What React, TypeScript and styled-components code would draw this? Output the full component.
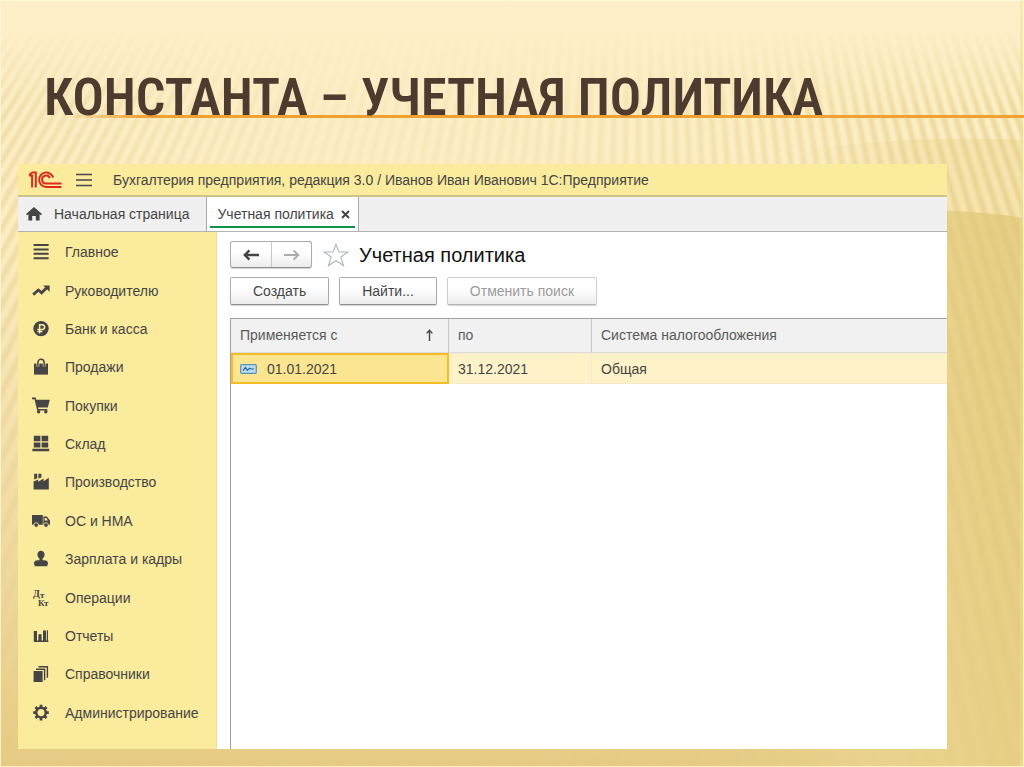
import React from 'react';
import styled, { createGlobalStyle } from 'styled-components';

const ink = '#454545';
const sun = '#faeb9d';

const GlobalStyle = createGlobalStyle`
  *, *::before, *::after { box-sizing: border-box; }
  body {
    margin: 0;
    color: ${ink};
    font: 14px/20px "Liberation Sans", Arial, sans-serif;
  }
  button { font: inherit; color: inherit; cursor: pointer; }
  svg { display: block; flex: none; }
`;

const Slide = styled.div`
  position: relative;
  isolation: isolate;
  display: flex;
  flex-direction: column;
  min-height: 100vh;
  padding: 74px 0 18px;
  overflow: hidden;
`;

const BackdropSvg = styled.svg`
  position: absolute;
  inset: 0;
  z-index: -1;
  width: 100%;
  height: 100%;
`;

const SlideTitle = styled.h1`
  margin: 0 0 42px;
  padding-left: 44px;
  background: linear-gradient(90deg, rgba(240, 161, 50, 0) 6%, #f0a132 14%) 0 41px / 100% 3px no-repeat;
  color: #4e3b30;
  font: 600 52px/48px "Roboto Condensed", "Liberation Sans", sans-serif;
  text-transform: uppercase;
`;

const AppWindow = styled.main`
  flex: 1;
  display: flex;
  flex-direction: column;
  margin: 0 77px 0 18px;
  background: #fff;
`;

const TopBar = styled.header`
  display: flex;
  align-items: center;
  height: 33px;
  padding: 0 11px;
  border-bottom: 2px solid #cdc48a;
  background: ${sun};
`;

const MenuButton = styled.button`
  margin: 0 21px 0 14px;
  padding: 0;
  border: 0;
  background: none;
`;

const TabStrip = styled.nav`
  display: flex;
  height: 35px;
  border-bottom: 1px solid #b4b4b4;
  background: #f0f0f0;
`;

const HomeTab = styled.button`
  display: flex;
  align-items: center;
  gap: 12px;
  padding: 0 17px 0 8px;
  border: 0;
  border-right: 1px solid #a9a9a9;
  background: none;
`;

const ActiveTab = styled.div`
  display: flex;
  align-items: center;
  gap: 7px;
  padding: 0 8px 0 7px;
  border-right: 1px solid #a9a9a9;
  background: linear-gradient(#0e9448, #0e9448) 3px 29px / calc(100% - 6px) 2px no-repeat #fff;
`;

const TabLabel = styled.button`
  padding: 0 0 0 3px;
  border: 0;
  background: none;
`;

const CloseButton = styled.button`
  padding: 0;
  border: 0;
  background: none;
`;

const Body = styled.div`
  flex: 1;
  display: flex;
`;

const SideNav = styled.nav`
  flex: none;
  display: grid;
  grid-auto-rows: 1fr;
  width: 199px;
  padding: 1px 0 17px;
  border-right: 1px solid #e6dcae;
  background: ${sun};
`;

const SideLink = styled.a`
  display: flex;
  align-items: center;
  gap: 15px;
  padding-left: 14px;
  color: ${ink};
  text-decoration: none;
  white-space: nowrap;
`;

const Content = styled.section`
  flex: 1;
  min-width: 0;
  display: flex;
  flex-direction: column;
  padding: 9px 0 0 13px;
`;

const HeadingRow = styled.div`
  display: flex;
  align-items: center;
  margin-bottom: 9px;
`;

const HistoryGroup = styled.div`
  display: flex;
  height: 27px;
  border: 1px solid #acacac;
  border-bottom-color: #8f8f8f;
  border-radius: 3px;
  background: linear-gradient(#fff 40%, #ececec);
  box-shadow: 0 1px 1px #d4d4d4;
`;

const HistoryButton = styled.button`
  display: flex;
  align-items: center;
  justify-content: center;
  width: 40px;
  padding: 0;
  border: 0;
  background: none;
  & + & { border-left: 1px solid #c8c8c8; }
`;

const StarButton = styled.button`
  margin: 0 10px 0 11px;
  padding: 0;
  border: 0;
  background: none;
`;

const PageTitle = styled.h2`
  margin: 0;
  color: #111;
  font-size: 20px;
  line-height: 24px;
  font-weight: 400;
`;

const CommandBar = styled.div`
  display: flex;
  gap: 10px;
  margin-bottom: 13px;
`;

const CommandButton = styled.button`
  height: 28px;
  padding: 0 22px;
  border: 1px solid #acacac;
  border-bottom-color: #8f8f8f;
  border-radius: 2px;
  background: linear-gradient(#fff 40%, #ececec);
  box-shadow: 0 1px 1px #d4d4d4;
  &:disabled {
    border-color: #cfcfcf;
    border-bottom-color: #b5b5b5;
    color: #9b9b9b;
  }
`;

const GridFrame = styled.div`
  flex: 1;
  border: solid #9f9f9f;
  border-width: 1px 0 0 1px;
`;

const Grid = styled.table`
  width: 100%;
  table-layout: fixed;
  border-collapse: separate;
  border-spacing: 0;
`;

const HeadCell = styled.th<{ $width?: number }>`
  width: ${p => (p.$width ? `${p.$width}px` : 'auto')};
  height: 34px;
  padding: 0 9px 2px;
  border-right: 1px solid #c6c6c6;
  border-bottom: 1px solid #dcdcdc;
  background: #f1f1f1;
  color: #5a5a5a;
  font-weight: 400;
  text-align: left;
  &:last-child { border-right: 0; }
`;

const SortHead = styled.span`
  display: flex;
  align-items: center;
  justify-content: space-between;
  padding-right: 5px;
`;

const Cell = styled.td<{ $selected?: boolean }>`
  height: 31px;
  padding: 0 9px;
  border: solid #f4ead0;
  border-width: 1px 1px 1px 0;
  background: #fdf2c8;
  &:last-child { border-right: 0; }
  ${p => p.$selected && `
    padding-left: 7px;
    border: 2px solid #f4bd28;
    background: #fce590;
  `}
`;

const DateMark = styled.span`
  display: flex;
  align-items: center;
  gap: 10px;
`;

/* Ray fan: every ray starts at one vanishing point above the slide. */
const VANISH = { x: 646, y: -910 };
const FLOOR = 780;
const rays = Array.from({ length: 150 }, (_, i) => {
  const at = (x: number) => VANISH.x + ((x - VANISH.x) * (FLOOR - VANISH.y)) / (100 - VANISH.y);
  const x = -420 + i * 12;
  return `M${VANISH.x} ${VANISH.y}L${at(x).toFixed(1)} ${FLOOR}L${at(x + 5).toFixed(1)} ${FLOOR}Z`;
}).join('');

const Backdrop = () => (
  <BackdropSvg viewBox="0 0 1024 767" preserveAspectRatio="none" aria-hidden="true">
    <defs>
      <linearGradient id="base" x1="0" y1="0" x2="0" y2="1">
        <stop offset="0" stopColor="#fdefc8" />
        <stop offset=".3" stopColor="#fdedc2" />
        <stop offset=".65" stopColor="#f3dea5" />
        <stop offset=".95" stopColor="#e8ce88" />
        <stop offset="1" stopColor="#e6cb84" />
      </linearGradient>
      <linearGradient id="warm" x1="0" y1="0" x2="1" y2="0">
        <stop offset="0" stopColor="#f5e0a6" stopOpacity="0" />
        <stop offset=".6" stopColor="#f5e0a6" stopOpacity=".7" />
      </linearGradient>
      <linearGradient id="sand" x1="0" y1="0" x2="1" y2="0">
        <stop offset="0" stopColor="#e8d189" stopOpacity="0" />
        <stop offset=".7" stopColor="#e9d38b" />
        <stop offset="1" stopColor="#e7cf85" />
      </linearGradient>
      <linearGradient id="fadeY" x1="0" y1="0" x2="0" y2="1">
        <stop offset=".04" stopColor="#fff" stopOpacity="0" />
        <stop offset=".14" stopColor="#fff" stopOpacity=".9" />
        <stop offset=".5" stopColor="#fff" stopOpacity=".8" />
        <stop offset="1" stopColor="#fff" stopOpacity=".12" />
      </linearGradient>
      <linearGradient id="rayTone" gradientUnits="userSpaceOnUse" x1="0" y1="0" x2="1024" y2="0">
        <stop offset="0" stopColor="#e2cc8c" stopOpacity=".6" />
        <stop offset=".3" stopColor="#e2cc8c" stopOpacity=".16" />
        <stop offset=".55" stopColor="#e2cc8c" stopOpacity=".25" />
        <stop offset=".85" stopColor="#dfc97f" stopOpacity=".55" />
        <stop offset="1" stopColor="#dcc678" stopOpacity=".65" />
      </linearGradient>
      <mask id="rayMask" maskUnits="userSpaceOnUse" x="0" y="0" width="1024" height="767">
        <rect width="1024" height="767" fill="url(#fadeY)" />
      </mask>
      <filter id="soft" filterUnits="userSpaceOnUse" x="0" y="0" width="1024" height="767">
        <feGaussianBlur stdDeviation="1.8" />
      </filter>
    </defs>
    <rect width="1024" height="767" fill="url(#base)" />
    <path d="M800 152Q900 134 1024 140V767H800Z" fill="url(#warm)" />
    <path d="M700 207Q950 205 1024 218V767H700Z" fill="url(#sand)" />
    <g mask="url(#rayMask)">
      <path d={rays} fill="url(#rayTone)" filter="url(#soft)" />
    </g>
    <path d="M1020 0h4v767h-4z" fill="#f0e08a" opacity=".45" />
    <path d="M.5 .5H1023.5V766.5H.5Z" fill="none" stroke="#fdf7dc" strokeOpacity=".8" />
  </BackdropSvg>
);

const Logo = () => (
  <svg width="33" height="18" viewBox="0 0 33 18" fill="none" stroke="#dd2b1c" strokeWidth="2" role="img" aria-label="1С">
    <path d="M0 4.2L2.6 1.9M0 4.6H3.1V16.5M2.4 1.4H6.8V16.5" />
    <path d="M24.2 6.6A7.2 7.2 0 1 0 17.2 15.9H32.5" />
    <path d="M20.8 7.2A4 4 0 1 0 17.2 12.6H32.5" />
  </svg>
);

const Icon = ({ children }: { children: React.ReactNode }) => (
  <svg width="18" height="18" viewBox="0 0 18 18" fill={ink} aria-hidden="true">{children}</svg>
);

const sections: { label: string; icon: React.ReactNode }[] = [
  { label: 'Главное', icon: <path d="M1.6 1h15v2h-15zM1.6 5.4h15v2h-15zM1.6 9.8h15v2h-15zM1.6 14.2h15v2h-15z" /> },
  {
    label: 'Руководителю',
    icon: (
      <>
        <path d="M1.2 12.6L6.4 8L9.6 10.8L15 5.6" fill="none" stroke={ink} strokeWidth="2.8" />
        <path d="M11.2 3.4H17.6V9.8Z" />
      </>
    ),
  },
  {
    label: 'Банк и касса',
    icon: (
      <>
        <circle cx="9" cy="8.6" r="7.7" />
        <path d="M7.6 13.4V4.7H10.2A2.3 2.3 0 0 1 10.2 9.5H5.4M5.4 11.5H10.4" fill="none" stroke={sun} strokeWidth="1.5" />
      </>
    ),
  },
  {
    label: 'Продажи',
    icon: (
      <>
        <path d="M2 5.6H16V16.6H2z" />
        <path d="M5.9 8.4V4.4A3.1 3.1 0 0 1 12.1 4.4V8.4" fill="none" stroke={sun} strokeWidth="2.8" />
        <path d="M5.9 8.4V4.4A3.1 3.1 0 0 1 12.1 4.4V8.4" fill="none" stroke={ink} strokeWidth="1.5" />
      </>
    ),
  },
  {
    label: 'Покупки',
    icon: (
      <>
        <path d="M0 .6H3.6L4.3 2.8H17.8L15.8 10.6H6L6.4 12H15.4V13.4H5.2L2.5 2.2H0z" />
        <circle cx="6.6" cy="14.8" r="1.7" />
        <circle cx="13.8" cy="14.8" r="1.7" />
      </>
    ),
  },
  { label: 'Склад', icon: <path d="M1.8 .8h6.6v5.4H1.8zM9.6 .8h6.6v5.4H9.6zM1.8 7.4h6.6v5.2H1.8zM9.6 7.4h6.6v5.2H9.6zM.4 13.8h16.8v2.4H.4z" /> },
  { label: 'Производство', icon: <path d="M1.6 16.6V8.4L6.2 6.4V8.8L11.6 5.4V8.2L16.8 4.8V16.6zM2.2 .8H5.2V5.2L2.2 6.6zM6.4 .8H9.4V4.4L6.4 5.6z" /> },
  {
    label: 'ОС и НМА',
    icon: (
      <>
        <path d="M0 3H10.8V12.8H0zM11.4 4.6H14.8L18 8.6V12.8H11.4z" />
        <path d="M12.6 6H14.2L16 8.4H12.6z" fill={sun} />
        <circle cx="4.2" cy="13" r="2.3" stroke={sun} strokeWidth=".8" />
        <circle cx="14" cy="13" r="2.3" stroke={sun} strokeWidth=".8" />
      </>
    ),
  },
  { label: 'Зарплата и кадры', icon: <path d="M9 .8A3.6 3.6 0 0 1 12.6 4.6C12.6 6.4 11.8 7.8 10.6 8.6V10.2H12.4C14.8 10.2 16 11.6 16 13.2L15.2 16.2H2.8L2 13.2C2 11.6 3.2 10.2 5.6 10.2H7.4V8.6C6.2 7.8 5.4 6.4 5.4 4.6A3.6 3.6 0 0 1 9 .8z" /> },
  {
    label: 'Операции',
    icon: (
      <g fontFamily="Liberation Serif, serif" fontWeight="700">
        <text x="1" y="8" fontSize="10">Д</text>
        <text x="8" y="9" fontSize="9">т</text>
        <text x="6" y="17" fontSize="9">К</text>
        <text x="12" y="17" fontSize="9">т</text>
      </g>
    ),
  },
  { label: 'Отчеты', icon: <path d="M1.8 4h3.2v9.6H1.8zM6.4 7.2H9.6v6.4H6.4zM11 3.4h3.2v10.2H11zM1.8 13.4h14.6v1.6H1.8zM15 3.2h1v11h-1z" /> },
  {
    label: 'Справочники',
    icon: (
      <>
        <path d="M1.6 6H10.6V17H1.6z" />
        <path d="M4 4.2H12.6V15.2M6.4 1.8H15.4V12.8" fill="none" stroke={ink} strokeWidth="1.4" />
      </>
    ),
  },
  {
    label: 'Администрирование',
    icon: (
      <>
        <circle cx="9" cy="8.6" r="4.8" fill="none" stroke={ink} strokeWidth="2.4" />
        <path d="M9 .8V4M9 13.2V16.4M1.2 8.6H4.4M13.6 8.6H16.8M3.5 3.1L5.6 5.2M12.4 12L14.5 14.1M3.5 14.1L5.6 12M12.4 5.2L14.5 3.1" stroke={ink} strokeWidth="2.8" />
      </>
    ),
  },
];

export default function App() {
  return (
    <Slide>
      <GlobalStyle />
      <Backdrop />
      <SlideTitle>Константа – учетная политика</SlideTitle>
      <AppWindow>
        <TopBar>
          <Logo />
          <MenuButton aria-label="Меню">
            <svg width="16" height="14" viewBox="0 0 16 14" stroke={ink} strokeWidth="1.4">
              <path d="M0 1.5H16M0 7H16M0 12.5H16" />
            </svg>
          </MenuButton>
          <span>Бухгалтерия предприятия, редакция 3.0 / Иванов Иван Иванович 1С:Предприятие</span>
        </TopBar>
        <TabStrip>
          <HomeTab>
            <svg width="16" height="14" viewBox="0 0 16 14" fill={ink} aria-hidden="true">
              <path d="M8 0L16 7L15 8.2L13.6 7.2V13.4H9.8V9H6.2V13.4H2.4V7.2L1 8.2L0 7z" />
            </svg>
            Начальная страница
          </HomeTab>
          <ActiveTab>
            <TabLabel>Учетная политика</TabLabel>
            <CloseButton aria-label="Закрыть">
              <svg width="9" height="9" viewBox="0 0 9 9" stroke={ink} strokeWidth="2">
                <path d="M1 1L8 8M8 1L1 8" />
              </svg>
            </CloseButton>
          </ActiveTab>
        </TabStrip>
        <Body>
          <SideNav>
            {sections.map(s => (
              <SideLink href="#" key={s.label}>
                <Icon>{s.icon}</Icon>
                {s.label}
              </SideLink>
            ))}
          </SideNav>
          <Content>
            <HeadingRow>
              <HistoryGroup>
                <HistoryButton aria-label="Назад">
                  <svg width="16" height="12" viewBox="0 0 16 12" fill="none" stroke={ink} strokeWidth="2.4">
                    <path d="M16 6H2M6.4 1.4L1.8 6L6.4 10.6" />
                  </svg>
                </HistoryButton>
                <HistoryButton aria-label="Вперед">
                  <svg width="16" height="12" viewBox="0 0 16 12" fill="none" stroke="#acacac" strokeWidth="2">
                    <path d="M0 6H14M9.6 1.4L14.2 6L9.6 10.6" />
                  </svg>
                </HistoryButton>
              </HistoryGroup>
              <StarButton aria-label="В избранное">
                <svg width="26" height="24" viewBox="0 0 26 24" fill="#fff" stroke="#b4b9c0" strokeWidth="1.2">
                  <path d="M13 1.2L15.9 9H24.8L17.8 14L20.4 22.6L13 17.4L5.6 22.6L8.2 14L1.2 9H10.1Z" />
                </svg>
              </StarButton>
              <PageTitle>Учетная политика</PageTitle>
            </HeadingRow>
            <CommandBar>
              <CommandButton>Создать</CommandButton>
              <CommandButton>Найти...</CommandButton>
              <CommandButton disabled>Отменить поиск</CommandButton>
            </CommandBar>
            <GridFrame>
              <Grid>
                <thead>
                  <tr>
                    <HeadCell $width={218}>
                      <SortHead>
                        Применяется с
                        <svg width="9" height="12" viewBox="0 0 9 12" fill="none" stroke={ink} strokeWidth="1.4" aria-hidden="true">
                          <path d="M4.5 12V1.4M1.6 4.4L4.5 1.2L7.4 4.4" />
                        </svg>
                      </SortHead>
                    </HeadCell>
                    <HeadCell $width={143}>по</HeadCell>
                    <HeadCell>Система налогообложения</HeadCell>
                  </tr>
                </thead>
                <tbody>
                  <tr>
                    <Cell $selected>
                      <DateMark>
                        <svg width="17" height="10" viewBox="0 0 17 10" fill="none" aria-hidden="true">
                          <rect x=".7" y=".7" width="15.6" height="8.6" rx="1" fill="#b9dcf2" stroke="#5f8fb5" strokeWidth="1.2" />
                          <path d="M3 6.6L5.4 3.6L7.4 6.4L9.6 4.2L11 5H14" stroke="#27618f" strokeWidth="1.2" />
                        </svg>
                        01.01.2021
                      </DateMark>
                    </Cell>
                    <Cell>31.12.2021</Cell>
                    <Cell>Общая</Cell>
                  </tr>
                </tbody>
              </Grid>
            </GridFrame>
          </Content>
        </Body>
      </AppWindow>
    </Slide>
  );
}
